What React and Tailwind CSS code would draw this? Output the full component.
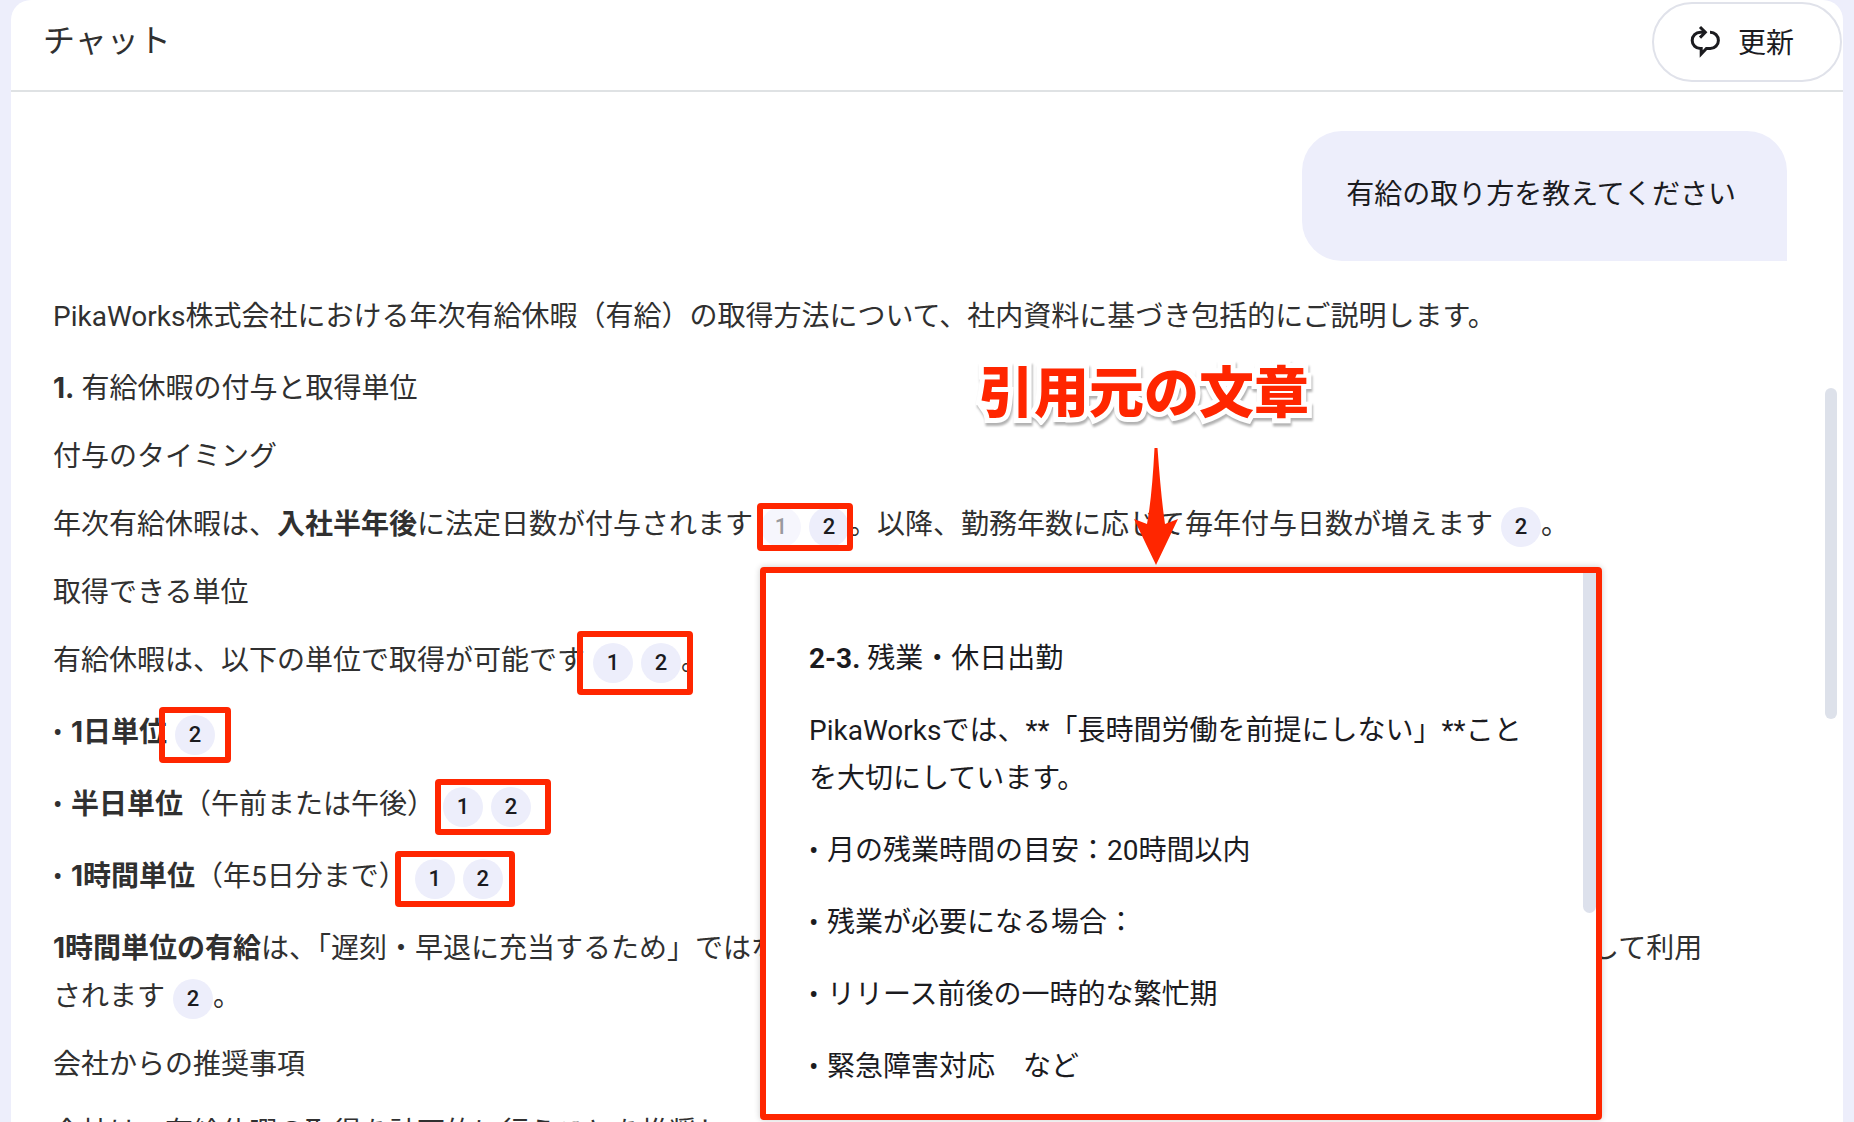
import React from "react";

const Cite = ({ n, faded }) => (
  <button
    type="button"
    className={
      faded
        ? "w-10 h-10 rounded-full bg-[#f6f6fd] text-[22px] leading-10 font-medium text-[#9a9a9e]"
        : "w-10 h-10 rounded-full bg-[#edeefb] text-[22px] leading-10 font-medium text-[#1b1b1f]"
    }
  >
    {n}
  </button>
);

// Group of citation buttons, optionally framed in red
const Cites = ({ numbers, fadedNumber, frame }) => (
  <span className="relative inline-flex gap-2 ml-2 align-middle">
    {numbers.map((n) => (
      <Cite key={n} n={n} faded={n === fadedNumber} />
    ))}
    {frame && (
      <span
        className={`absolute border-6 border-[#ff2600] rounded-sm pointer-events-none ${frame}`}
      />
    )}
  </span>
);

const Bold = ({ children }) => (
  <b className="leading-none font-[Inter,'Noto_Sans_CJK_JP',sans-serif]">{children}</b>
);

const Bullet = () => <span className="inline-block w-[18px]">•</span>;

const RefreshIcon = () => (
  <svg
    viewBox="0 0 32 34"
    className="w-8 h-[34px]"
    fill="none"
    stroke="currentColor"
    strokeWidth="3"
    aria-hidden="true"
  >
    <path d="M15 7.3H10.3A8.1 8.1 0 0 0 10.3 23.5H11.2V29L16.4 23.5H20.3A8.1 8.1 0 0 0 20.3 7.3H20" />
    <path d="M10 2L15.3 7.3L10 12.6" />
  </svg>
);

const Header = () => (
  <header className="h-[92px] flex items-start justify-between border-b-2 border-[#dfe2e4] pl-8 pr-px">
    <h1 className="text-[32px] leading-10 pt-[21px] text-[#303030]">チャット</h1>
    <button
      type="button"
      className="mt-0.5 h-20 flex items-center gap-4 rounded-full border-2 border-[#e0e2ea] bg-white pl-9 pr-[46px] text-[28px] text-[#1b1b1f]"
    >
      <RefreshIcon />
      <span className="pt-1">更新</span>
    </button>
  </header>
);

const Answer = () => (
  <article className="mt-8 mr-16 text-[#303030]">
    <p>
      PikaWorks株式会社における年次有給休暇（有給）の取得方法について、社内資料に基づき包括的にご説明します。
    </p>
    <h2 className="mt-6">
      <Bold>1.</Bold> 有給休暇の付与と取得単位
    </h2>
    <h3 className="mt-5">付与のタイミング</h3>
    <p className="mt-5">
      年次有給休暇は、<Bold>入社半年後</Bold>に法定日数が付与されます
      <Cites numbers={[1, 2]} fadedNumber={1} frame="-inset-1" />
      。以降、勤務年数に応じて毎年付与日数が増えます
      <Cites numbers={[2]} />。
    </p>
    <h3 className="mt-5">取得できる単位</h3>
    <p className="mt-5">
      有給休暇は、以下の単位で取得が可能です
      <Cites numbers={[1, 2]} frame="-left-4 -right-3 -top-3 -bottom-3" />。
    </p>
    <ul>
      <li className="mt-6">
        <Bullet />
        <Bold>1日単位</Bold>
        <Cites numbers={[2]} frame="-left-4 -right-4 -top-2 -bottom-2" />
      </li>
      <li className="mt-6">
        <Bullet />
        <Bold>半日単位</Bold>（午前または午後）
        <Cites numbers={[1, 2]} frame="-left-2 -right-5 -top-2 -bottom-2" />
      </li>
      <li className="mt-6">
        <Bullet />
        <Bold>1時間単位</Bold>（年5日分まで）
        <Cites numbers={[1, 2]} frame="-left-5 -right-3 -top-2 -bottom-2" />
      </li>
    </ul>
    <p className="mt-6">
      <Bold>1時間単位の有給</Bold>
      は、「遅刻・早退に充当するため」ではなく、社員のリフレッシュや私生活の充実を目的とした休暇制度として利用されます
      <Cites numbers={[2]} />。
    </p>
    <h3 className="mt-5">会社からの推奨事項</h3>
    <p className="mt-5">会社は、有給休暇の取得を計画的に行うことを推奨し、</p>
  </article>
);

const SourcePopup = () => (
  <section className="absolute left-[749px] top-[567px] w-[842px] h-[553px] overflow-hidden rounded-sm border-6 border-[#ff2600] bg-white pl-[43px] pr-12 pt-[62px] text-[#1b1b1f] shadow-[0_0_6px_rgba(0,0,0,0.2)]">
    <h2>
      <b>2-3.</b> 残業・休日出勤
    </h2>
    <p className="mt-6">
      PikaWorksでは、**「長時間労働を前提にしない」**ことを大切にしています。
    </p>
    <ul>
      <li className="mt-6">
        <Bullet />
        月の残業時間の目安：20時間以内
      </li>
      <li className="mt-6">
        <Bullet />
        残業が必要になる場合：
      </li>
      <li className="mt-6">
        <Bullet />
        リリース前後の一時的な繁忙期
      </li>
      <li className="mt-6">
        <Bullet />
        緊急障害対応　など
      </li>
    </ul>
    <div className="absolute right-0 top-0 w-[13px] h-[340px] rounded-b-full bg-[#dde1ec]" />
  </section>
);

const Callout = () => (
  <div className="absolute left-[968px] top-[361px] flex flex-col items-center">
    <strong className="text-[55px] leading-16 font-black text-[#ff2600] [-webkit-text-stroke:10px_white] [paint-order:stroke_fill] drop-shadow-[1px_3px_1px_rgba(0,0,0,0.3)]">
      引用元の文章
    </strong>
    <svg viewBox="0 0 48 120" className="mt-[22px] ml-6 w-12 h-[120px]" fill="#ff2600">
      <path d="M22.5 1H25.5Q29 50 33 77L46 72L24 118L2 72L15 77Q20 50 22.5 1Z" />
    </svg>
  </div>
);

const App = () => {
  return (
    <div
      lang="ja"
      className="h-screen overflow-hidden bg-[#edeefb] px-[11px] text-[28px] leading-12 font-[Roboto,'Noto_Sans_CJK_JP',sans-serif]"
    >
      <main className="relative h-full overflow-hidden bg-white rounded-t-[20px]">
        <Header />

        <div className="pl-[42px] pr-14 pt-[39px]">
          <div className="w-fit ml-auto rounded-[40px] rounded-br-none bg-[#edeefb] pl-11 pr-[51px] pt-10 pb-[42px] text-[#1b1b1f]">
            有給の取り方を教えてください
          </div>
          <Answer />
        </div>

        <div className="absolute right-1.5 top-[388px] w-3 h-[331px] rounded-full bg-[#dde1ea]" />

        <SourcePopup />
        <Callout />
      </main>
    </div>
  );
};

export default App;
